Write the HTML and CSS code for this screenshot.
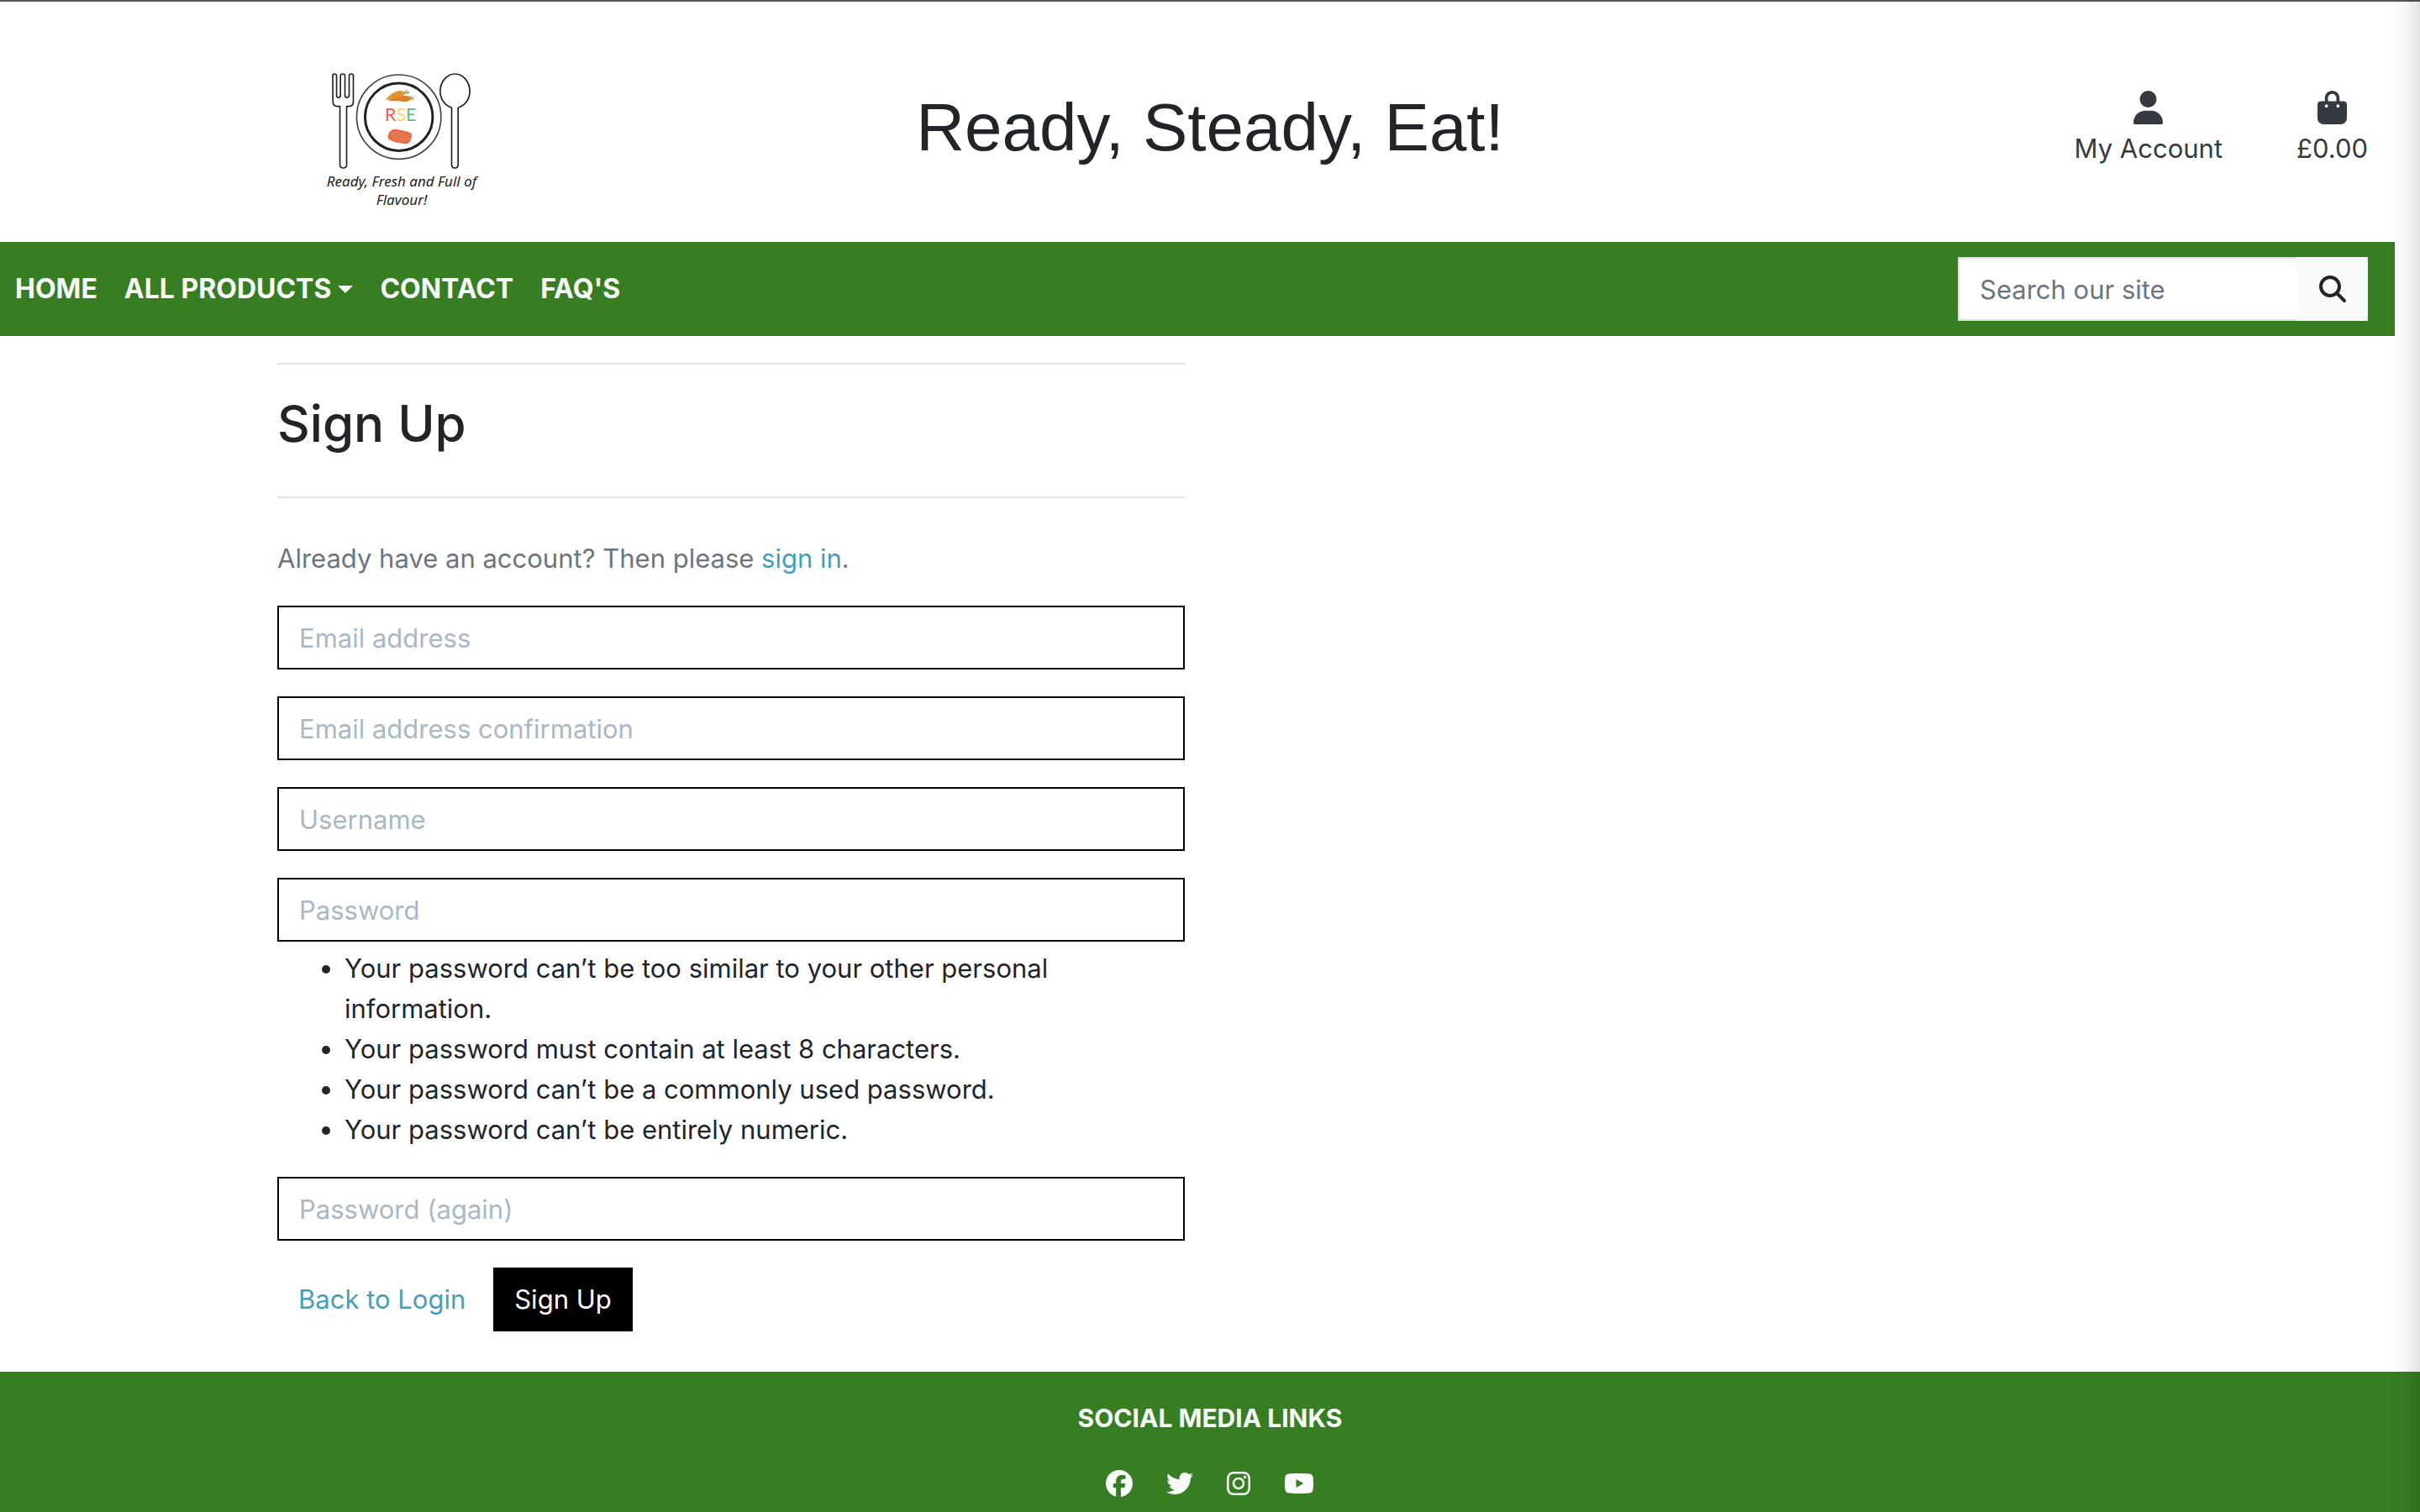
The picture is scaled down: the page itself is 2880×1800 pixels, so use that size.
FILE: index.html
```html
<!DOCTYPE html>
<html lang="en">
<head>
<meta charset="utf-8">
<title>Ready, Steady, Eat!</title>
<link rel="stylesheet" href="styles.css">
</head>
<body>
<header class="top">
  <a class="logo" href="#">
    <svg class="logo-art" viewBox="100 75 510 355" role="img" aria-label="RSE">
      <g fill="none" stroke="#222" stroke-width="5" stroke-linejoin="round">
        <path d="M108 91q0-7 7-7t7 7v69q0 9 7 9t7-9v-69q0-7 8-7t8 7v69q0 9 7 9t8-9v-69q0-7 7-7t8 7v92q0 17-17 17h-7v210q0 11-12 11t-12-11V200h-8q-17 0-17-17z"/>
        <circle cx="345" cy="238" r="151" stroke="#444"/>
        <circle cx="345" cy="238" r="121" stroke-width="9"/>
        <path d="M534 205c-24-7-41-31-41-58 0-35 24-63 53-63s53 28 53 63c0 27-17 51-42 58v205q0 11-11 11t-12-11z"/>
      </g>
      <g stroke="#6f9a45" stroke-width="3" fill="none">
        <path d="M362 151l14-10M364 152l18-5M366 154l17-1M382 170l10-7M384 172l15-4M385 174l14 1"/>
      </g>
      <path fill="#e49a2e" d="M299 177c8-15 27-31 49-33 14-1 21 7 17 15-8 10-48 15-66 18z"/>
      <path fill="#dc8426" d="M305 179c17-9 44-17 65-17 14 0 19 5 18 11-3 9-14 12-27 10-17-2-36 0-56-4z"/>
      <path stroke="#b9691c" stroke-width="2" fill="none" d="M323 160l8 5M342 149l6 7M335 170l4 6M360 165l3 8M372 172l3 7"/>
      <path fill="#e4704a" d="M318 286c8-8 26-3 39 0 15 3 31 6 34 14 2 9-3 25-10 31-8 7-24 2-36 0-15-3-34-8-38-16-3-9 2-24 11-29z"/>
      <path stroke="#ee9470" stroke-width="2" fill="none" d="M316 302q18-8 32-14M320 314q22-14 46-20M338 321q20-12 44-18M360 327q12-8 24-12"/>
      <text class="logo-letters" x="351" y="254" text-anchor="middle"><tspan fill="#ee5a56">R</tspan><tspan fill="#f7d768">S</tspan><tspan fill="#55c27a">E</tspan></text>
    </svg>
    <span class="tagline">Ready, Fresh and Full of<br>Flavour!</span>
  </a>
  <h1 class="brand">Ready, Steady, Eat!</h1>
  <div class="tools">
    <a class="tool" href="#">
      <svg class="tool-icon" viewBox="0 0 448 512" aria-hidden="true"><path d="M224 256A128 128 0 1 0 224 0a128 128 0 1 0 0 256zm-45.7 48C79.800 304 0 383.800 0 482.300C0 498.700 13.300 512 29.700 512l388.600 0c16.400 0 29.700-13.300 29.700-29.700C448 383.800 368.200 304 269.700 304l-91.400 0z"/></svg>
      <span>My Account</span>
    </a>
    <a class="tool" href="#">
      <svg class="tool-icon" viewBox="0 0 448 512" aria-hidden="true"><path d="M160 112c0-35.300 28.700-64 64-64s64 28.700 64 64l0 48-128 0 0-48zm-48 48l-64 0c-26.500 0-48 21.500-48 48L0 416c0 53 43 96 96 96l256 0c53 0 96-43 96-96l0-208c0-26.500-21.500-48-48-48l-64 0 0-48C336 50.100 285.900 0 224 0S112 50.100 112 112l0 48zm24 48a24 24 0 1 1 0 48 24 24 0 1 1 0-48zm152 24a24 24 0 1 1 48 0 24 24 0 1 1 -48 0z"/></svg>
      <span>£0.00</span>
    </a>
  </div>
</header>

<nav class="navbar">
  <ul class="menu">
    <li><a href="#">HOME</a></li>
    <li><a class="dropdown" href="#">ALL PRODUCTS</a></li>
    <li><a href="#">CONTACT</a></li>
    <li><a href="#">FAQ'S</a></li>
  </ul>
  <form class="search">
    <input type="text" placeholder="Search our site" aria-label="Search our site">
    <button type="button" aria-label="Search">
      <svg viewBox="0 0 512 512" aria-hidden="true"><path d="M416 208c0 45.900-14.900 88.300-40 122.700L502.600 457.400c12.500 12.500 12.500 32.800 0 45.300s-32.800 12.500-45.300 0L330.700 376c-34.400 25.200-76.800 40-122.700 40C93.100 416 0 322.900 0 208S93.100 0 208 0S416 93.100 416 208zM208 352a144 144 0 1 0 0-288 144 144 0 1 0 0 288z"/></svg>
    </button>
  </form>
</nav>

<main class="container">
  <section class="signup">
    <hr>
    <h2>Sign Up</h2>
    <hr>
    <p class="lead">Already have an account? Then please <a href="#">sign in</a>.</p>
    <form class="fields">
      <input type="email" placeholder="Email address" aria-label="Email address">
      <input type="email" placeholder="Email address confirmation" aria-label="Email address confirmation">
      <input type="text" placeholder="Username" aria-label="Username">
      <div class="password">
        <input type="password" placeholder="Password" aria-label="Password">
        <ul class="hints">
          <li>Your password can’t be too similar to your other personal information.</li>
          <li>Your password must contain at least 8 characters.</li>
          <li>Your password can’t be a commonly used password.</li>
          <li>Your password can’t be entirely numeric.</li>
        </ul>
      </div>
      <input type="password" placeholder="Password (again)" aria-label="Password (again)">
      <div class="actions">
        <a class="back" href="#">Back to Login</a>
        <button class="submit" type="button">Sign Up</button>
      </div>
    </form>
  </section>
</main>

<footer class="footer">
  <h3>SOCIAL MEDIA LINKS</h3>
  <div class="social">
    <a href="#" aria-label="Facebook"><svg viewBox="0 0 512 512"><path d="M512 256C512 114.600 397.400 0 256 0S0 114.600 0 256C0 376 82.700 476.800 194.200 504.500V334.200H141.400V256h52.800V222.300c0-87.100 39.400-127.500 125-127.500c16.200 0 44.200 3.200 55.700 6.400V172c-6-.6-16.500-1-29.600-1c-42 0-58.200 15.900-58.200 57.200V256h83.600l-14.400 78.200H287V510.100C413.800 494.800 512 386.900 512 256h0z"/></svg></a>
    <a href="#" aria-label="Twitter"><svg viewBox="0 0 512 512"><path d="M459.370 151.716c.325 4.548.325 9.097.325 13.645 0 138.720-105.583 298.558-298.558 298.558-59.452 0-114.680-17.219-161.137-47.106 8.447.974 16.568 1.299 25.340 1.299 49.055 0 94.213-16.568 130.274-44.832-46.132-.975-84.792-31.188-98.112-72.772 6.498.974 12.995 1.624 19.818 1.624 9.421 0 18.843-1.300 27.614-3.573-48.081-9.747-84.143-51.980-84.143-102.985v-1.299c13.969 7.797 30.214 12.670 47.431 13.319-28.264-18.843-46.781-51.005-46.781-87.391 0-19.492 5.197-37.360 14.294-52.954 51.655 63.675 129.300 105.258 216.365 109.807-1.624-7.797-2.599-15.918-2.599-24.040 0-57.828 46.782-104.934 104.934-104.934 30.213 0 57.502 12.670 76.670 33.137 23.715-4.548 46.456-13.320 66.599-25.340-7.798 24.366-24.366 44.833-46.132 57.827 21.117-2.273 41.584-8.122 60.426-16.243-14.292 20.791-32.161 39.308-52.628 54.253z"/></svg></a>
    <a href="#" aria-label="Instagram"><svg viewBox="0 0 448 512"><path d="M224.100 141c-63.600 0-114.900 51.300-114.900 114.900s51.300 114.900 114.900 114.900S339 319.500 339 255.900 287.700 141 224.100 141zm0 189.600c-41.100 0-74.700-33.500-74.700-74.700s33.500-74.700 74.700-74.700 74.700 33.500 74.700 74.700-33.600 74.700-74.700 74.700zm146.400-194.300c0 14.900-12 26.800-26.800 26.800-14.900 0-26.800-12-26.800-26.800s12-26.800 26.800-26.800 26.800 12 26.800 26.800zm76.100 27.200c-1.700-35.900-9.900-67.700-36.200-93.900-26.200-26.200-58-34.400-93.900-36.200-37-2.100-147.900-2.100-184.900 0-35.800 1.700-67.600 9.900-93.900 36.100s-34.400 58-36.200 93.900c-2.100 37-2.100 147.900 0 184.900 1.700 35.900 9.900 67.700 36.200 93.900s58 34.400 93.900 36.200c37 2.100 147.900 2.100 184.900 0 35.900-1.700 67.700-9.900 93.900-36.200 26.200-26.200 34.400-58 36.200-93.900 2.100-37 2.100-147.800 0-184.800zM398.800 388c-7.800 19.600-22.900 34.700-42.600 42.600-29.500 11.700-99.500 9-132.100 9s-102.700 2.600-132.100-9c-19.600-7.800-34.700-22.900-42.600-42.600-11.700-29.500-9-99.500-9-132.100s-2.600-102.700 9-132.100c7.800-19.600 22.900-34.700 42.600-42.600 29.500-11.700 99.500-9 132.100-9s102.700-2.600 132.100 9c19.600 7.800 34.700 22.900 42.600 42.600 11.700 29.500 9 99.500 9 132.100s2.700 102.700-9 132.100z"/></svg></a>
    <a href="#" aria-label="YouTube"><svg viewBox="0 0 576 512"><path d="M549.655 124.083c-6.281-23.650-24.787-42.276-48.284-48.597C458.781 64 288 64 288 64S117.220 64 74.629 75.486c-23.497 6.322-42.003 24.947-48.284 48.597-11.412 42.867-11.412 132.305-11.412 132.305s0 89.438 11.412 132.305c6.281 23.650 24.787 41.500 48.284 47.821C117.220 448 288 448 288 448s170.780 0 213.371-11.486c23.497-6.321 42.003-24.171 48.284-47.821 11.412-42.867 11.412-132.305 11.412-132.305s0-89.438-11.412-132.305zm-317.510 213.508V175.185l142.739 81.205-142.739 81.201z"/></svg></a>
  </div>
</footer>
</body>
</html>
```
FILE: styles.css
```css
* { box-sizing: border-box; }

body {
  margin: 0;
  min-height: 100vh;
  display: flex;
  flex-direction: column;
  background: #fff;
  color: #212529;
  font: 400 31px/48px Inter, "Liberation Sans", sans-serif;
  border-top: 2px solid #555;
}

/* soft shade along the right window edge */
body::after {
  content: "";
  position: fixed;
  top: 0;
  right: 0;
  bottom: 0;
  width: 36px;
  background: linear-gradient(to right, rgba(0, 0, 0, 0), rgba(0, 0, 0, 0.03) 50%, rgba(0, 0, 0, 0.11));
  pointer-events: none;
}

a { color: #459fb6; text-decoration: none; }
svg { display: block; fill: currentColor; }
input, button { font: inherit; border-radius: 0; }

.top {
  display: grid;
  grid-template-columns: repeat(3, 1fr);
  height: 286px;
}

.logo {
  display: flex;
  flex-direction: column;
  align-items: center;
  padding: 83px 4px 0 0;
  color: #222;
}
.logo-art { width: 170px; height: 118px; }
.logo-letters { font: 400 64px Lato, sans-serif; }
.tagline {
  font: italic 400 17px/22px "Noto Sans", sans-serif;
  text-align: center;
  padding-top: 2px;
}

.brand {
  margin: 0;
  padding-top: 102px;
  font: 400 80px/96px "Liberation Sans", Arial, sans-serif;
  text-align: center;
  white-space: nowrap;
}

.tools {
  display: flex;
  justify-content: flex-end;
  gap: 88px;
  padding: 106px 62px 0 0;
}
.tool {
  display: flex;
  flex-direction: column;
  align-items: center;
  gap: 5px;
  color: #343a40;
}
.tool-icon { width: 35px; height: 40px; }

.navbar {
  display: flex;
  justify-content: space-between;
  align-items: center;
  margin-right: 30px;
  padding: 18px 32px 18px 18px;
  background: #377e22;
}
.menu {
  display: flex;
  gap: 32px;
  margin: 0;
  padding: 0;
  list-style: none;
  font-size: 32px;
  font-weight: 700;
}
.menu a { color: #f8f9fa; }
.dropdown { display: flex; align-items: center; gap: 8px; }
.dropdown::after {
  content: "";
  border: 9px solid transparent;
  border-top-color: currentColor;
  border-bottom: 0;
}

.search { display: flex; width: 488px; }
.search input {
  flex: 1;
  min-width: 0;
  height: 76px;
  padding: 0 24px;
  border: 2px solid #dee2e6;
  border-right: 0;
  background: #fff;
}
.search input::placeholder { color: #6c757d; opacity: 1; }
.search button {
  width: 84px;
  padding: 0 26px;
  border: 0;
  background: #f8f9fa;
  color: #212529;
}
.search svg { width: 32px; height: 32px; }

.container {
  width: 100%;
  max-width: 2280px;
  margin: 0 auto;
  padding: 32px 30px 48px;
}
.signup { width: 50%; padding-right: 30px; }
.signup hr { margin: 0; border: 0; border-top: 2px solid #e4e4e4; }
.signup h2 {
  margin: 0;
  padding: 32px 0 48px;
  font-size: 60px;
  font-weight: 500;
  line-height: 77px;
}
.lead { margin: 0; padding: 48px 0 32px; color: #6c757d; }

.fields { display: flex; flex-direction: column; gap: 32px; }
.fields input {
  display: block;
  width: 100%;
  height: 76px;
  padding: 0 24px;
  border: 2px solid #000;
  background: #fff;
}
.fields input::placeholder { color: #aab7c4; opacity: 1; }
.hints { margin: 0; padding: 8px 80px 0; }

.actions { display: flex; gap: 8px; }
.back, .submit { padding: 14px 25px; }
.submit { border: 0; background: #000; color: #fff; }

.footer {
  flex: 1;
  background: #377e22;
  color: #f8f9fa;
  text-align: center;
}
.footer h3 {
  margin: 0;
  padding-top: 31px;
  font-size: 30px;
  font-weight: 700;
  line-height: 48px;
}
.social {
  display: flex;
  justify-content: center;
  gap: 40px;
  padding: 38px 0 18px;
}
.social a { color: inherit; }
.social svg { height: 32px; }
```
